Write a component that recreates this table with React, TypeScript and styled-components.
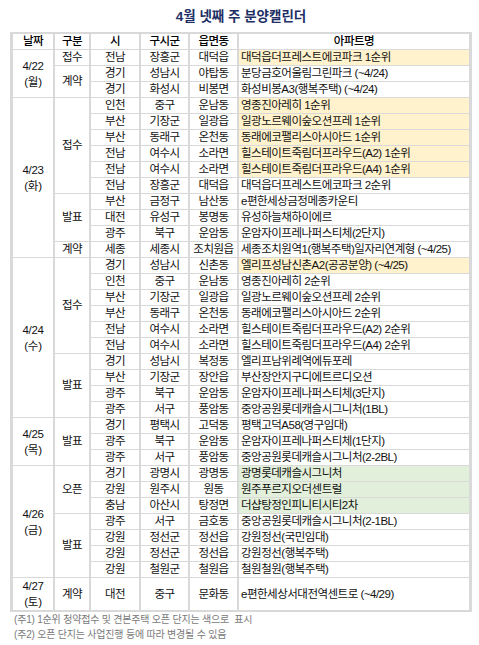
import React from "react";
import styled, { createGlobalStyle } from "styled-components";

const GlobalStyle = createGlobalStyle`
  html, body {
    margin: 0;
    padding: 0;
    background: #ffffff;
  }
  body {
    font-family: "Liberation Sans", "Noto Sans CJK KR", sans-serif;
  }
`;

type Hl = "y" | "g" | undefined;
type Row = [string, string, string, string, Hl?];
type Section = { type: string; rows: Row[] };
type Group = { date: string; day: string; tall?: boolean; sections: Section[] };

const data: Group[] = [
  {
    date: "4/22",
    day: "(월)",
    sections: [
      { type: "접수", rows: [["전남", "장흥군", "대덕읍", "대덕읍더프레스트에코파크 1순위", "y"]] },
      {
        type: "계약",
        rows: [
          ["경기", "성남시", "야탑동", "분당금호어울림그린파크 (~4/24)"],
          ["경기", "화성시", "비봉면", "화성비봉A3(행복주택) (~4/24)"],
        ],
      },
    ],
  },
  {
    date: "4/23",
    day: "(화)",
    sections: [
      {
        type: "접수",
        rows: [
          ["인천", "중구", "운남동", "영종진아레히 1순위", "y"],
          ["부산", "기장군", "일광읍", "일광노르웨이숲오션프레 1순위", "y"],
          ["부산", "동래구", "온천동", "동래에코팰리스아시아드 1순위", "y"],
          ["전남", "여수시", "소라면", "힐스테이트죽림더프라우드(A2) 1순위", "y"],
          ["전남", "여수시", "소라면", "힐스테이트죽림더프라우드(A4) 1순위", "y"],
          ["전남", "장흥군", "대덕읍", "대덕읍더프레스트에코파크 2순위"],
        ],
      },
      {
        type: "발표",
        rows: [
          ["부산", "금정구", "남산동", "e편한세상금정메종카운티"],
          ["대전", "유성구", "봉명동", "유성하늘채하이에르"],
          ["광주", "북구", "운암동", "운암자이프레나퍼스티체(2단지)"],
        ],
      },
      { type: "계약", rows: [["세종", "세종시", "조치원읍", "세종조치원역1(행복주택)일자리연계형 (~4/25)"]] },
    ],
  },
  {
    date: "4/24",
    day: "(수)",
    sections: [
      {
        type: "접수",
        rows: [
          ["경기", "성남시", "신촌동", "엘리프성남신촌A2(공공분양) (~4/25)", "y"],
          ["인천", "중구", "운남동", "영종진아레히 2순위"],
          ["부산", "기장군", "일광읍", "일광노르웨이숲오션프레 2순위"],
          ["부산", "동래구", "온천동", "동래에코팰리스아시아드 2순위"],
          ["전남", "여수시", "소라면", "힐스테이트죽림더프라우드(A2) 2순위"],
          ["전남", "여수시", "소라면", "힐스테이트죽림더프라우드(A4) 2순위"],
        ],
      },
      {
        type: "발표",
        rows: [
          ["경기", "성남시", "복정동", "엘리프남위례역에듀포레"],
          ["부산", "기장군", "장안읍", "부산장안지구디에트르디오션"],
          ["광주", "북구", "운암동", "운암자이프레나퍼스티체(3단지)"],
          ["광주", "서구", "풍암동", "중앙공원롯데캐슬시그니처(1BL)"],
        ],
      },
    ],
  },
  {
    date: "4/25",
    day: "(목)",
    sections: [
      {
        type: "발표",
        rows: [
          ["경기", "평택시", "고덕동", "평택고덕A58(영구임대)"],
          ["광주", "북구", "운암동", "운암자이프레나퍼스티체(1단지)"],
          ["광주", "서구", "풍암동", "중앙공원롯데캐슬시그니처(2-2BL)"],
        ],
      },
    ],
  },
  {
    date: "4/26",
    day: "(금)",
    sections: [
      {
        type: "오픈",
        rows: [
          ["경기", "광명시", "광명동", "광명롯데캐슬시그니처", "g"],
          ["강원", "원주시", "원동", "원주푸르지오더센트럴", "g"],
          ["충남", "아산시", "탕정면", "더샵탕정인피니티시티2차", "g"],
        ],
      },
      {
        type: "발표",
        rows: [
          ["광주", "서구", "금호동", "중앙공원롯데캐슬시그니처(2-1BL)"],
          ["강원", "정선군", "정선읍", "강원정선(국민임대)"],
          ["강원", "정선군", "정선읍", "강원정선(행복주택)"],
          ["강원", "철원군", "철원읍", "철원철원(행복주택)"],
        ],
      },
    ],
  },
  {
    date: "4/27",
    day: "(토)",
    tall: true,
    sections: [{ type: "계약", rows: [["대전", "중구", "문화동", "e편한세상서대전역센트로 (~4/29)"]] }],
  },
];

const Page = styled.div`
  padding: 7px 0 0 10px;
  width: 462px;
`;

const Title = styled.h1`
  margin: 0 0 5px 0;
  height: 20px;
  line-height: 20px;
  font-size: 13.5px;
  font-weight: bold;
  letter-spacing: 0;
  text-align: center;
  color: #1e2f66;
`;

const Table = styled.table`
  width: 462px;
  table-layout: fixed;
  border-collapse: separate;
  border-spacing: 2px 1px;
  background: #d9d9d9;
  border: 1px solid #d9d9d9;
  font-size: 11.5px;
  letter-spacing: -0.5px;
  color: #111111;
`;

const HeadCell = styled.th`
  height: 15px;
  padding: 0;
  line-height: 15px;
  background: #ffffff;
  font-weight: 500;
  text-align: center;
  color: #000000;
`;

const Cell = styled.td<{ $tall?: boolean; $hl?: Hl; $left?: boolean }>`
  height: ${(p) => (p.$tall ? "30px" : "15px")};
  padding: ${(p) => (p.$left ? "0 0 0 2px" : "0")};
  line-height: 15px;
  white-space: nowrap;
  overflow: hidden;
  text-align: ${(p) => (p.$left ? "left" : "center")};
  vertical-align: middle;
  background: ${(p) => (p.$hl === "y" ? "#fff2cc" : p.$hl === "g" ? "#e2efda" : "#ffffff")};
`;

const DateText = styled.div`
  line-height: 16px;
  letter-spacing: -0.3px;
`;

const Notes = styled.div`
  margin-left: 4px;
  font-size: 10px;
  line-height: 15px;
  letter-spacing: -0.2px;
  color: #7a7a7a;
`;

const widths = [40, 34, 48, 47, 47, 230];

export default function App() {
  return (
    <>
      <GlobalStyle />
      <Page>
        <Title>4월 넷째 주 분양캘린더</Title>
        <Table>
          <colgroup>
            {widths.map((w, i) => (
              <col key={i} style={{ width: w }} />
            ))}
          </colgroup>
          <thead>
            <tr>
              <HeadCell>날짜</HeadCell>
              <HeadCell>구분</HeadCell>
              <HeadCell>시</HeadCell>
              <HeadCell>구시군</HeadCell>
              <HeadCell>읍면동</HeadCell>
              <HeadCell>아파트명</HeadCell>
            </tr>
          </thead>
          <tbody>
            {data.map((g) => {
              const total = g.sections.reduce((n, s) => n + s.rows.length, 0);
              return g.sections.map((s, si) =>
                s.rows.map((r, ri) => (
                  <tr key={`${g.date}-${si}-${ri}`}>
                    {si === 0 && ri === 0 && (
                      <Cell rowSpan={total} $tall={g.tall}>
                        <DateText>{g.date}</DateText>
                        <DateText>{g.day}</DateText>
                      </Cell>
                    )}
                    {ri === 0 && (
                      <Cell rowSpan={s.rows.length} $tall={g.tall}>
                        {s.type}
                      </Cell>
                    )}
                    <Cell $tall={g.tall}>{r[0]}</Cell>
                    <Cell $tall={g.tall}>{r[1]}</Cell>
                    <Cell $tall={g.tall}>{r[2]}</Cell>
                    <Cell $tall={g.tall} $left $hl={r[4]}>
                      {r[3]}
                    </Cell>
                  </tr>
                ))
              );
            })}
          </tbody>
        </Table>
        <Notes>
          <div>(주1) 1순위 청약접수 및 견본주택 오픈 단지는 색으로&nbsp; 표시</div>
          <div>(주2) 오픈 단지는 사업진행 등에 따라 변경될 수 있음</div>
        </Notes>
      </Page>
    </>
  );
}
